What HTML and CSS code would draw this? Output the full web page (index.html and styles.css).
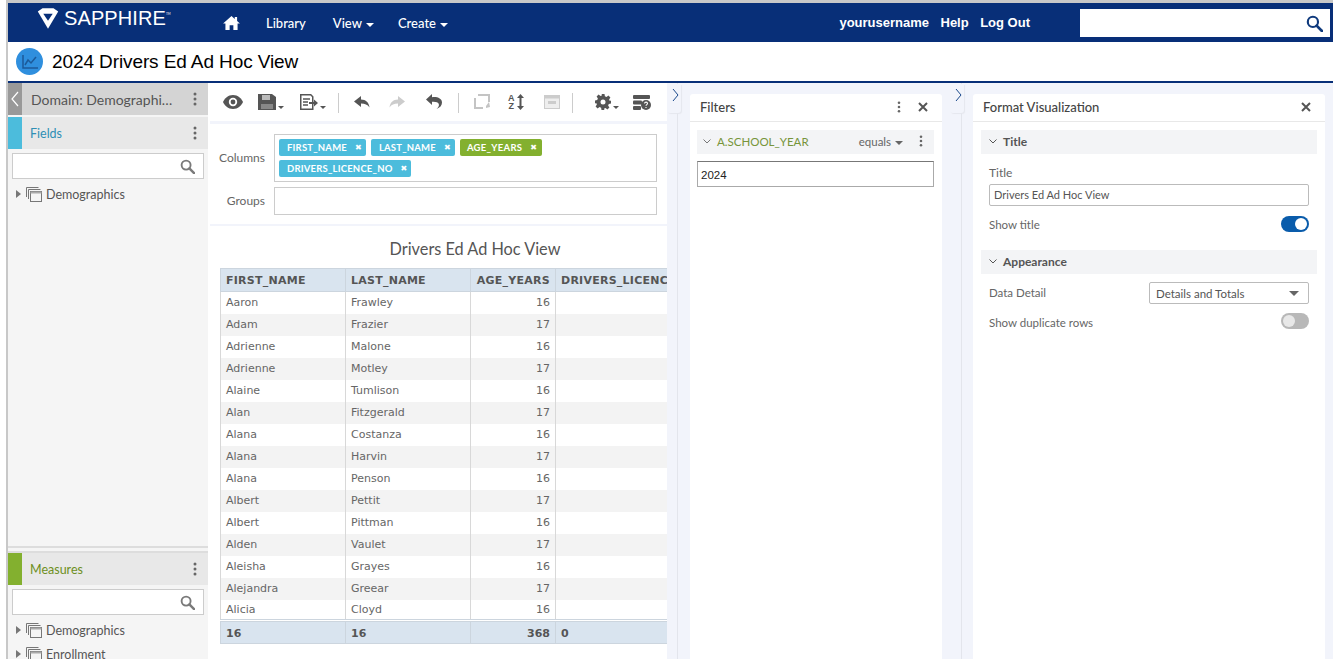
FILE: index.html
```html
<!DOCTYPE html>
<html lang="en">
<head>
<meta charset="utf-8">
<title>2024 Drivers Ed Ad Hoc View</title>
<link rel="stylesheet" href="styles.css">
</head>
<body>
<svg class="defs" width="0" height="0" aria-hidden="true">
  <symbol id="dots" viewBox="0 0 4 14"><circle cx="2" cy="2" r="1.5"/><circle cx="2" cy="7" r="1.5"/><circle cx="2" cy="12" r="1.5"/></symbol>
  <symbol id="mag" viewBox="0 0 16 16"><circle cx="6.5" cy="6.5" r="4.8" fill="none" stroke="currentColor" stroke-width="2"/><path d="M10 10l5 5" stroke="currentColor" stroke-width="2.6" stroke-linecap="round"/></symbol>
  <symbol id="close" viewBox="0 0 10 10"><path d="M1 1l8 8M9 1l-8 8" stroke="currentColor" stroke-width="2"/></symbol>
  <symbol id="folder" viewBox="0 0 16 15"><path d="M.5 10V.5h12M2.500 12V2.500h12" fill="none" stroke="#777"/><rect x="4.500" y="4.500" width="11" height="10" fill="#f5f5f5" stroke="#777"/><rect x="4.500" y="4.500" width="11" height="2" fill="#aaa"/></symbol>
</svg>
<div class="page">
  <header class="banner">
    <div class="logo">
      <svg class="logo-mark" viewBox="0 0 28 26"><path d="M1 4 7 0h14l6 4-13 22z" fill="#fff"/><path d="M8 7h12l-6 9z" fill="#082f78"/></svg>
      <span class="logo-text">SAPPHIRE</span><span class="logo-tm">TM</span>
    </div>
    <nav class="nav">
      <svg class="home" viewBox="0 0 18 15"><path d="M9 0 0 8h2.500v7h4.500v-5h4v5h4.500V8H18l-3-2.700V1h-2.500v2.100z" fill="#fff"/></svg>
      <span>Library</span>
      <span>View <i class="caret"></i></span>
      <span>Create <i class="caret"></i></span>
    </nav>
    <div class="user">
      <span>yourusername</span><span>Help</span><span>Log Out</span>
    </div>
    <div class="global-search"><svg class="global-mag"><use href="#mag"/></svg></div>
  </header>
  <div class="titlebar">
    <span class="title-icon"><svg viewBox="0 0 16 14" width="16" height="14"><path d="M1 0v13h15" fill="none" stroke="#1c5a99" stroke-width="1.500"/><path d="M3 10l3-5 3 3 5-6" fill="none" stroke="#1c5a99" stroke-width="1.500"/></svg></span>
    <h1>2024 Drivers Ed Ad Hoc View</h1>
  </div>
  <main class="workspace">
    <aside class="sidebar">
      <div class="domain-head">
        <span class="collapse"><svg viewBox="0 0 8 16" width="8" height="16"><path d="M7 1 1 8l6 7" fill="none" stroke="#fff" stroke-width="1.200"/></svg></span>
        <span class="domain-name">Domain: Demographi…</span>
        <svg class="dots"><use href="#dots"/></svg>
      </div>
      <section class="field-group grow">
        <div class="group-head"><span class="swatch blue"></span><span class="group-name blue-text">Fields</span><svg class="dots"><use href="#dots"/></svg></div>
        <div class="side-search"><svg class="side-mag"><use href="#mag"/></svg></div>
        <div class="tree-item"><i class="tri"></i><svg class="folder"><use href="#folder"/></svg>Demographics</div>
      </section>
      <section class="field-group measures">
        <div class="group-head"><span class="swatch green"></span><span class="group-name green-text">Measures</span><svg class="dots"><use href="#dots"/></svg></div>
        <div class="side-search"><svg class="side-mag"><use href="#mag"/></svg></div>
        <div class="tree-item"><i class="tri"></i><svg class="folder"><use href="#folder"/></svg>Demographics</div>
        <div class="tree-item"><i class="tri"></i><svg class="folder"><use href="#folder"/></svg>Enrollment</div>
      </section>
    </aside>

    <section class="center">
      <div class="toolbar">
        <svg class="tb" width="20" height="14" viewBox="0 0 20 14"><path d="M10 0C5 0 1.500 3.500 0 7c1.500 3.500 5 7 10 7s8.500-3.500 10-7c-1.500-3.500-5-7-10-7z" fill="#555"/><circle cx="10" cy="7" r="4.200" fill="#fff"/><circle cx="10" cy="7" r="2.400" fill="#555"/></svg>
        <span class="tb-drop save"><svg width="18" height="16" viewBox="0 0 18 16"><path d="M0 0h14l4 3v13H0z" fill="#555"/><rect x="4" y="1" width="8" height="5" fill="#bbb"/><rect x="3" y="10" width="12" height="5" fill="#888"/></svg><i class="mini-caret"></i></span>
        <span class="tb-drop export"><svg width="18" height="16" viewBox="0 0 18 16"><path d="M.75.75h10l2 2v12.500h-12z" fill="none" stroke="#555" stroke-width="1.500"/><path d="M3 5h7M3 8h5M3 11h5" stroke="#555" stroke-width="1.300"/><path d="M9 8h5V5.500l4 3.500-4 3.500V10H9z" fill="#555"/></svg><i class="mini-caret"></i></span>
        <i class="sep s1"></i>
        <svg class="undo" width="16" height="12" viewBox="0 0 16 12"><path d="M7 0 0 5.500 7 11V7.500c4 0 6.500 1 8.500 4C15 6.500 12 3.500 7 3.500z" fill="#555"/></svg>
        <svg class="redo" width="16" height="12" viewBox="0 0 16 12"><path d="M9 0l7 5.500L9 11V7.500c-4 0-6.500 1-8.500 4C1 6.500 4 3.500 9 3.500z" fill="#ccc"/></svg>
        <svg class="reset" width="16" height="15" viewBox="0 0 16 15"><path d="M0 5.500 6 0v3.200c5.500-.6 10 1.300 10 5.300 0 3-2 5.200-5.500 6.500 2-1.700 2.800-3.400 2.300-5-.5-1.800-3.300-2.600-6.800-2.300V11z" fill="#555"/></svg>
        <i class="sep s2"></i>
        <svg class="switch" width="16" height="15" viewBox="0 0 16 15"><path d="M4 1H15V8M1 4v10h8" fill="none" stroke="#c4c4c4" stroke-width="2"/><path d="M12 12l3-4 1 5-4 1z" fill="#c4c4c4"/></svg>
        <span class="sort"><span class="az">A<br>Z</span><svg width="7" height="16" viewBox="0 0 7 16"><path d="M3.500 0 7 4H4.500v8H7l-3.500 4L0 12h2.500V4H0z" fill="#555"/></svg></span>
        <svg class="layout" width="16" height="14" viewBox="0 0 16 14"><rect x=".5" y=".5" width="15" height="13" fill="#eee" stroke="#ccc"/><rect x="1" y="1" width="14" height="2.500" fill="#ccc"/><rect x="4" y="6" width="8" height="3" fill="#ccc"/></svg>
        <i class="sep s3"></i>
        <span class="tb-drop gear"><svg width="16" height="16" viewBox="0 0 16 16"><path d="M6.500 0h3l.4 2.200 1.600.7 1.900-1.300 2 2-1.300 1.900.7 1.600L16 6.500v3l-2.200.4-.7 1.600 1.300 1.900-2 2-1.900-1.300-1.600.7L9.500 16h-3l-.4-2.200-1.600-.7-1.900 1.300-2-2 1.300-1.900-.7-1.600L0 9.500v-3l2.200-.4.700-1.600L1.600 2.600l2-2 1.900 1.300 1.600-.7z" fill="#555"/><circle cx="8" cy="8" r="2.500" fill="#fff"/></svg><i class="mini-caret"></i></span>
        <svg class="dbhelp" width="18" height="15" viewBox="0 0 18 15"><rect x="0" y="0" width="17" height="4" rx="1" fill="#555"/><rect x="0" y="5.500" width="9" height="4" rx="1" fill="#555"/><rect x="0" y="11" width="8" height="4" rx="1" fill="#555"/><circle cx="13" cy="10" r="5" fill="#555"/><path d="M11.500 8.500c.2-1.800 3-1.800 3 0 0 1.200-1.500 1-1.500 2.300M13 12v1" fill="none" stroke="#fff" stroke-width="1.100"/></svg>
      </div>
      <div class="rows-area">
        <div class="zone-row">
          <label>Columns</label>
          <div class="zone tall">
            <span class="chip c-blue">FIRST_NAME<b>✖</b></span>
            <span class="chip c-blue">LAST_NAME<b>✖</b></span>
            <span class="chip c-green">AGE_YEARS<b>✖</b></span>
            <span class="chip c-blue">DRIVERS_LICENCE_NO<b>✖</b></span>
          </div>
        </div>
        <div class="zone-row">
          <label>Groups</label>
          <div class="zone short"></div>
        </div>
      </div>
      <div class="report">
        <h2>Drivers Ed Ad Hoc View</h2>
        <div class="table-clip">
          <table>
            <colgroup><col class="w1"><col class="w2"><col class="w3"><col class="w4"></colgroup>
            <thead><tr><th>FIRST_NAME</th><th>LAST_NAME</th><th>AGE_YEARS</th><th>DRIVERS_LICENCE_NO</th></tr></thead>
            <tbody>
              <tr><td>Aaron</td><td>Frawley</td><td class="num">16</td><td></td></tr>
              <tr><td>Adam</td><td>Frazier</td><td class="num">17</td><td></td></tr>
              <tr><td>Adrienne</td><td>Malone</td><td class="num">16</td><td></td></tr>
              <tr><td>Adrienne</td><td>Motley</td><td class="num">17</td><td></td></tr>
              <tr><td>Alaine</td><td>Tumlison</td><td class="num">16</td><td></td></tr>
              <tr><td>Alan</td><td>Fitzgerald</td><td class="num">17</td><td></td></tr>
              <tr><td>Alana</td><td>Costanza</td><td class="num">16</td><td></td></tr>
              <tr><td>Alana</td><td>Harvin</td><td class="num">17</td><td></td></tr>
              <tr><td>Alana</td><td>Penson</td><td class="num">16</td><td></td></tr>
              <tr><td>Albert</td><td>Pettit</td><td class="num">17</td><td></td></tr>
              <tr><td>Albert</td><td>Pittman</td><td class="num">16</td><td></td></tr>
              <tr><td>Alden</td><td>Vaulet</td><td class="num">17</td><td></td></tr>
              <tr><td>Aleisha</td><td>Grayes</td><td class="num">16</td><td></td></tr>
              <tr><td>Alejandra</td><td>Greear</td><td class="num">17</td><td></td></tr>
              <tr><td>Alicia</td><td>Cloyd</td><td class="num">16</td><td></td></tr>
            </tbody>
            <tfoot><tr><td>16</td><td>16</td><td class="num">368</td><td>0</td></tr></tfoot>
          </table>
        </div>
      </div>
    </section>

    <div class="gutter g1"><span class="tab"><svg viewBox="0 0 7 14" width="7" height="14"><path d="M1 1l5 6-5 6" fill="none" stroke="#1b4a8c" stroke-width="1"/></svg></span></div>

    <section class="panel filters">
      <div class="panel-head"><span>Filters</span><svg class="dots small"><use href="#dots"/></svg><svg class="x"><use href="#close"/></svg></div>
      <div class="filter-body">
        <div class="filter-row">
          <svg class="chev" viewBox="0 0 8 5"><path d="M.5.5 4 4 7.500.5" fill="none" stroke="#777"/></svg>
          <span class="filter-name">A.SCHOOL_YEAR</span>
          <span class="filter-op">equals <i class="mini-caret dark"></i></span>
          <svg class="dots"><use href="#dots"/></svg>
        </div>
        <div class="filter-input">2024</div>
      </div>
    </section>

    <div class="gutter g2"><span class="tab"><svg viewBox="0 0 7 14" width="7" height="14"><path d="M1 1l5 6-5 6" fill="none" stroke="#1b4a8c" stroke-width="1"/></svg></span></div>

    <section class="panel format">
      <div class="panel-head"><span>Format Visualization</span><svg class="x"><use href="#close"/></svg></div>
      <div class="format-body">
        <div class="section-head"><svg class="chev" viewBox="0 0 8 5"><path d="M.5.5 4 4 7.500.5" fill="none" stroke="#555"/></svg>Title</div>
        <div class="section-body first">
          <div class="field-label">Title</div>
          <div class="text-input">Drivers Ed Ad Hoc View</div>
          <div class="setting toggle-row"><span>Show title</span><span class="toggle on"></span></div>
        </div>
        <div class="section-head"><svg class="chev" viewBox="0 0 8 5"><path d="M.5.5 4 4 7.500.5" fill="none" stroke="#555"/></svg>Appearance</div>
        <div class="section-body second">
          <div class="setting detail-row"><span>Data Detail</span><span class="select">Details and Totals<i class="sel-caret"></i></span></div>
          <div class="setting dup-row"><span>Show duplicate rows</span><span class="toggle off"></span></div>
        </div>
      </div>
    </section>
    <div class="edge"></div>
  </main>
</div>
</body>
</html>
```

FILE: styles.css
```css
* { box-sizing: border-box; }
html, body { margin: 0; height: 100%; overflow: hidden; background: #fff; }
body { font-family: "Lato", "Noto Sans", sans-serif; color: #555; font-size: 12px; }
.defs { position: absolute; }
.page { margin-left: 6px; height: 659px; display: flex; flex-direction: column; border-left: 2px solid #c8c8c8; border-top: 3px solid #c8c8c8; }

.banner { height: 39px; background: #082f78; display: flex; align-items: center; color: #fff; flex: none; }
.logo { width: 204px; padding-left: 29px; display: flex; align-items: center; height: 100%; padding-bottom: 8px; }
.logo-mark { width: 22px; height: 21px; flex: none; margin-right: 5px; }
.logo-text { font: 400 20px "Liberation Sans", sans-serif; letter-spacing: .1px; }
.logo-tm { font-size: 3px; align-self: flex-start; margin-top: 9px; }
.nav { display: flex; align-items: center; font-size: 13px; font-weight: 500; margin-left: 11px; }
.nav span { white-space: nowrap; }
.home { width: 17px; height: 14px; margin-right: 26px; }
.nav span:nth-of-type(1) { margin-right: 27px; }
.nav span:nth-of-type(2) { margin-right: 24px; }
.caret { display: inline-block; width: 0; height: 0; border: 4px solid transparent; border-top-color: #fff; border-bottom: 0; vertical-align: 1px; margin-left: 1px; }
.user { margin-left: auto; display: flex; gap: 11.500px; font: 700 13px "Liberation Sans", sans-serif; margin-right: 50px; }
.global-search { width: 250px; height: 28px; background: #fff; margin-right: 3px; display: flex; align-items: center; justify-content: flex-end; padding-right: 7px; margin-top: 1px; }
.global-mag { width: 17px; height: 17px; color: #0f3a7d; }

.titlebar { height: 39px; flex: none; display: flex; align-items: center; padding-left: 8px; gap: 9px; background: #fff; }
.title-icon { width: 27px; height: 27px; border-radius: 50%; background: #2f8fde; display: flex; align-items: center; justify-content: center; }
h1 { margin: 0; font: 400 19px "Liberation Sans", sans-serif; color: #000; letter-spacing: -.1px; }

.workspace { flex: 1; min-height: 0; display: flex; border-top: 2px solid #082f78; background: #f2f4fb; overflow: hidden; }

.sidebar { width: 202px; flex: none; background: #f5f5f5; display: flex; flex-direction: column; border-right: 2px solid #fff; }
.domain-head { height: 32px; background: #d4d4d4; display: flex; align-items: center; flex: none; }
.collapse { width: 14px; height: 100%; background: #999; display: flex; align-items: center; justify-content: center; }
.domain-name { flex: 1; padding-left: 9px; font-size: 14px; color: #555; white-space: nowrap; overflow: hidden; }
.dots { width: 4px; height: 14px; fill: #666; flex: none; margin-right: 11px; }
.field-group { display: flex; flex-direction: column; }
.grow { flex: 1; min-height: 0; margin-top: 2px; border-bottom: 2px solid #ddd; }
.measures { flex: none; height: 108px; margin-top: 3px; border-top: 2px solid #ddd; }
.group-head { height: 32px; background: #e8e8e8; display: flex; align-items: center; flex: none; }
.swatch { width: 14px; height: 100%; }
.swatch.blue { background: #4cbcdc; }
.swatch.green { background: #83b02f; }
.group-name { flex: 1; padding-left: 8px; font-size: 12.500px; }
.blue-text { color: #2f8fb5; }
.green-text { color: #6d8f22; }
.side-search { height: 26px; margin: 4px 4px 0; background: #fff; border: 1px solid #ccc; display: flex; align-items: center; justify-content: flex-end; padding-right: 8px; flex: none; }
.side-mag { width: 15px; height: 15px; color: #7a7a7a; }
.tree-item { display: flex; align-items: center; height: 24px; padding-left: 8px; font-size: 12.500px; color: #555; flex: none; }
.side-search + .tree-item { margin-top: 3px; }
.tri { width: 0; height: 0; border: 4px solid transparent; border-left: 5px solid #777; border-right: 0; margin-right: 5px; }
.folder { width: 16px; height: 15px; margin-right: 4px; }

.center { width: 457px; flex: none; background: #fff; display: flex; flex-direction: column; }
.toolbar { height: 38px; flex: none; position: relative; }
.toolbar > *, .tb-drop { position: absolute; top: 11px; }
.tb { left: 13px; top: 12px; }
.tb-drop { display: flex; align-items: flex-end; gap: 2px; }
.tb-drop.save { left: 48px; top: 11px; }
.tb-drop.export { left: 90px; top: 11px; }
.tb-drop.gear { left: 385px; top: 11px; }
.mini-caret { display: inline-block; width: 0; height: 0; border: 3px solid transparent; border-top-color: #555; border-bottom: 0; margin-bottom: 1px; }
.mini-caret.dark { border-top-color: #666; vertical-align: 1px; margin: 0 0 0 1px; border-width: 4px 4px 0; }
.sep { width: 1px; height: 20px; background: #ccc; top: 10px; }
.s1 { left: 128px; } .s2 { left: 248px; } .s3 { left: 362px; }
.undo { left: 144px; top: 13px; } .redo { left: 179px; top: 13px; } .reset { left: 216px; top: 11px; }
.switch { left: 264px; } .layout { left: 334px; top: 12px; } .dbhelp { left: 423px; top: 12px; }
.sort { left: 298px; top: 11px; display: flex; gap: 2px; align-items: center; }
.az { font: 700 9px/8px "Liberation Sans", sans-serif; color: #555; text-align: center; }

.rows-area { border-top: 3px solid #f2f4fb; border-bottom: 2px solid #f2f4fb; height: 105px; padding: 10px 10px 0 0; flex: none; }
.zone-row { display: flex; margin-bottom: 5px; }
.zone-row label { width: 55px; margin-right: 9px; text-align: right; font-size: 12px; align-self: center; color: #666; position: relative; top: -1px; }
.zone { flex: 1; background: #fff; border: 1px solid #ccc; }
.zone.tall { height: 48px; padding: 4px; display: flex; flex-wrap: wrap; gap: 4px 5px; align-content: flex-start; }
.zone.short { height: 28px; }
.chip { height: 17px; border-radius: 2px; color: #fff; font-size: 9.500px; font-weight: 700; line-height: 17px; padding: 0 4px 0 8px; display: inline-flex; white-space: nowrap; letter-spacing: .2px; }
.chip b { font: 700 8px/17px "DejaVu Sans", sans-serif; margin-left: 8px; }
.c-blue { background: #4cbcdc; }
.c-green { background: #83b02f; padding-left: 7px; padding-right: 5px; letter-spacing: .3px; }

.report { flex: 1; min-height: 0; padding: 12px 0 0 10px; }
h2 { margin: 0 0 8px; width: 510px; font-size: 16.300px; font-weight: 400; text-align: center; color: #555; line-height: 22px; }
.table-clip { width: 447px; overflow: hidden; }
table { border-collapse: collapse; table-layout: fixed; width: 447px; font: 11px "DejaVu Sans", Verdana, sans-serif; color: #666; }
.w1, .w2 { width: 125px; } .w3 { width: 85px; } .w4 { width: 112px; }
th, td { padding: 0 5px; border-left: 1px solid #d8d8d8; border-right: 1px solid #d8d8d8; white-space: nowrap; overflow: hidden; text-align: left; }
th { height: 23px; background: #d9e4ef; font-weight: 700; color: #555; letter-spacing: .25px; border-color: #ccd5de; border-top: 1px solid #ccd5de; border-bottom: 1px solid #ccd5de; }
th:nth-child(3) { text-align: right; }
tbody td { height: 22px; }
tbody tr:nth-child(even) td { background: #f3f3f3; }
tbody tr:last-child td { height: 21px; }
.num { text-align: right; }
tfoot td { height: 23px; padding-top: 2px; background: #d9e4ef; font-weight: 700; color: #555; border-color: #ccd5de; border-top: 3px double #ccd5de; border-bottom: 1px solid #ccd5de; }

.gutter { flex: none; position: relative; }
.g1 { width: 23px; }
.g2 { width: 31px; }
.gutter::after { content: ""; position: absolute; top: 0; bottom: 0; width: 1px; background: #e3e5ec; }
.g1::after { left: 10px; }
.g2::after { left: 19px; }
.tab { position: absolute; top: 1px; width: 14px; height: 29px; background: #f2f4fb; border-radius: 0 0 3px 3px; display: flex; justify-content: center; padding: 4px 0 0 2px; z-index: 1; box-shadow: 1px 1px 1px #e5e7ee; }
.g1 .tab { left: 0; }
.g2 .tab { left: 8px; }

.panel { flex: none; background: #fff; margin-top: 11px; border-radius: 3px 3px 0 0; }
.filters { width: 252px; }
.format { width: 352px; }
.edge { flex: 1; }
.panel-head { height: 28px; border-bottom: 1px solid #e8e8e8; display: flex; align-items: center; padding: 0 14px 2px 10px; font-size: 13px; font-weight: 500; color: #444; }
.panel-head > span { flex: 1; }
.dots.small { width: 4px; height: 12px; margin-right: 17px; }
.x { width: 10px; height: 10px; color: #555; }
.filter-body { padding: 8px 8px 0 7px; }
.filter-row { height: 24px; background: #f3f4f6; display: flex; align-items: center; padding: 0 0 2px 6px; }
.chev { width: 8px; height: 5px; flex: none; margin-right: 6px; }
.filter-name { flex: 1; color: #77953a; font-size: 11.500px; }
.filter-op { font-size: 11.500px; color: #666; margin-right: 16px; }
.filter-row .dots { margin-right: 11px; width: 4px; height: 12px; }
.filter-input { margin-top: 7px; height: 26px; border: 1px solid #aaa; border-top-color: #777; font: 11.500px/27px "Liberation Sans", sans-serif; color: #222; padding-left: 3px; }
.format-body { padding: 8px 8px 0; }
.section-head { height: 24px; background: #f3f4f6; display: flex; align-items: center; padding: 0 0 1px 8px; font-size: 12px; font-weight: 700; color: #555; }
.section-body { padding: 0 8px; }
.section-body.first { height: 96px; padding-top: 10px; }
.section-body.second { padding-top: 7px; }
.field-label { font-size: 12px; color: #666; height: 17px; line-height: 17px; }
.text-input { height: 22px; border: 1px solid #bbb; border-radius: 2px; font-size: 11px; line-height: 20px; padding-left: 4px; margin-top: 3px; color: #555; }
.setting { display: flex; justify-content: space-between; align-items: center; font-size: 11.500px; color: #666; }
.toggle-row { margin-top: 10px; }
.toggle { width: 28px; height: 16px; border-radius: 8px; position: relative; }
.toggle::after { content: ""; position: absolute; top: 2px; width: 12px; height: 12px; border-radius: 50%; }
.toggle.on { background: #0a5cab; }
.toggle.on::after { right: 2px; background: #fff; }
.toggle.off { background: #b8b8b8; }
.toggle.off::after { left: 2px; background: #e8e8e8; }
.select { width: 160px; height: 22px; margin-top: 1px; border: 1px solid #bbb; border-radius: 2px; background: #fff; display: flex; align-items: center; justify-content: space-between; padding: 0 9px 0 6px; font-size: 11.500px; color: #555; }
.sel-caret { width: 0; height: 0; border: 5px solid transparent; border-top: 5px solid #666; border-bottom: 0; }
.dup-row { margin-top: 9px; }
.dup-row span:first-child { padding-top: 3px; }
```
